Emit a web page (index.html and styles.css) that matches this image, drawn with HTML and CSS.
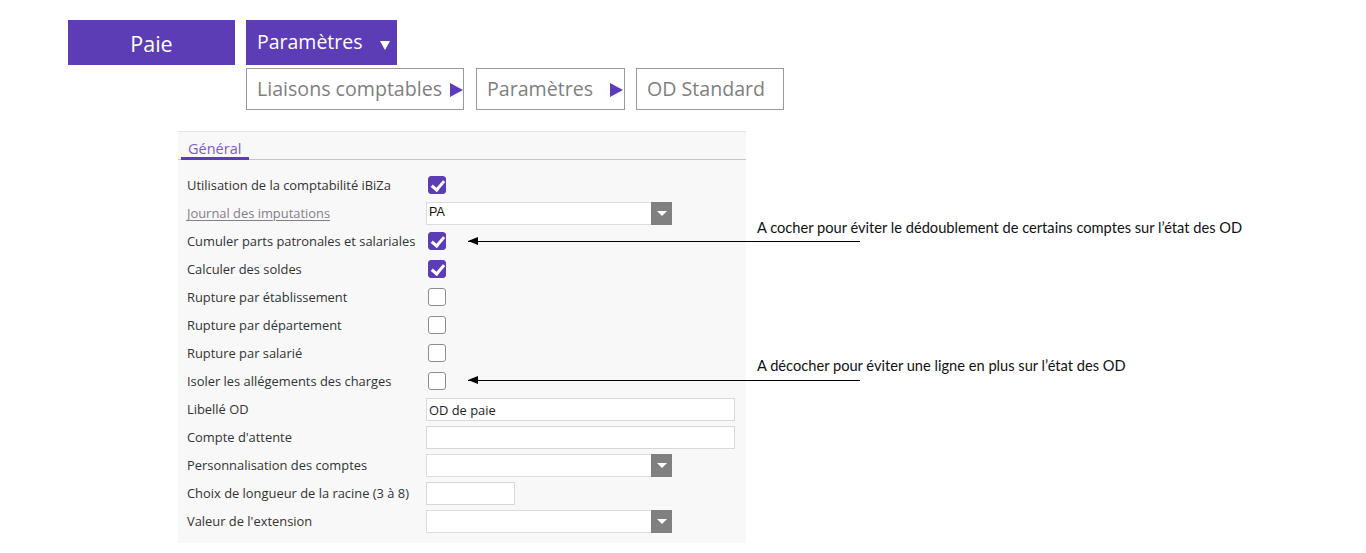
FILE: index.html
```html
<!DOCTYPE html>
<html lang="fr">
<head>
<meta charset="utf-8">
<title>Paie - Paramètres - OD Standard</title>
<link rel="stylesheet" href="styles.css">
</head>
<body>
<header class="nav">
  <div class="nav-top">
    <div class="nav-main">Paie</div>
    <div class="nav-sub">Paramètres <span class="caret"></span></div>
  </div>
  <div class="crumbs">
    <div class="crumb crumb-1">Liaisons comptables <span class="tri"></span></div>
    <div class="crumb crumb-2">Paramètres <span class="tri"></span></div>
    <div class="crumb crumb-3">OD Standard</div>
  </div>
</header>

<section class="panel">
  <div class="tabs"><span class="tab">Général</span></div>
  <div class="form">
    <div class="row"><span class="label">Utilisation de la comptabilité iBiZa</span><span class="check on"></span></div>
    <div class="row"><span class="label link">Journal des imputations </span><span class="select"><span class="val">PA</span><span class="btn"></span></span></div>
    <div class="row"><span class="label">Cumuler parts patronales et salariales</span><span class="check on"></span></div>
    <div class="row"><span class="label">Calculer des soldes</span><span class="check on"></span></div>
    <div class="row"><span class="label">Rupture par établissement</span><span class="check"></span></div>
    <div class="row"><span class="label">Rupture par département</span><span class="check"></span></div>
    <div class="row"><span class="label">Rupture par salarié</span><span class="check"></span></div>
    <div class="row"><span class="label">Isoler les allégements des charges</span><span class="check"></span></div>
    <div class="row"><span class="label">Libellé OD</span><span class="input">OD de paie</span></div>
    <div class="row"><span class="label">Compte d'attente</span><span class="input"></span></div>
    <div class="row"><span class="label">Personnalisation des comptes</span><span class="select"><span class="val"></span><span class="btn"></span></span></div>
    <div class="row"><span class="label">Choix de longueur de la racine (3 à 8)</span><span class="input small"></span></div>
    <div class="row"><span class="label">Valeur de l'extension</span><span class="select"><span class="val"></span><span class="btn"></span></span></div>
  </div>
</section>

<div class="note note-1">
  <span class="note-text">A cocher pour éviter le dédoublement de certains comptes sur l’état des OD</span>
  <span class="arrow"></span>
</div>
<div class="note note-2">
  <span class="note-text">A décocher pour éviter une ligne en plus sur l’état des OD</span>
  <span class="arrow"></span>
</div>
</body>
</html>
```

FILE: styles.css
```css
* { box-sizing: border-box; }
html, body { margin: 0; padding: 0; background: #fff; }
body { font-family: "Open Sans", "Noto Sans", sans-serif; position: relative; width: 1366px; height: 553px; overflow: hidden; }

.nav { padding: 20px 0 0 68px; }
.nav-top { display: flex; gap: 11px; }
.nav-main, .nav-sub {
  background: #5c3db5; color: #fff; height: 45px;
  font-family: "Open Sans", sans-serif;
}
.nav-main { width: 167px; display: flex; align-items: center; justify-content: center; padding-top: 2px; font-size: 21.5px; }
.nav-sub { width: 151px; padding: 8px 0 0 11px; font-size: 19.5px; }
.caret {
  display: inline-block; width: 0; height: 0; margin-left: 12px; vertical-align: -1px;
  border-left: 5px solid transparent; border-right: 5px solid transparent; border-top: 9px solid #fff;
}
.crumbs { display: flex; margin: 3px 0 0 178px; }
.crumb {
  height: 42px; border: 1px solid #9a9a9a; color: #7f7f7f;
  font-size: 19.6px; padding: 6px 0 0 10px; white-space: nowrap;
}
.crumb-1 { width: 218px; margin-right: 12px; }
.crumb-2 { width: 149px; margin-right: 11px; }
.crumb-3 { width: 148px; }
.tri {
  display: inline-block; width: 0; height: 0; vertical-align: -1px;
  border-top: 7px solid transparent; border-bottom: 7px solid transparent; border-left: 13px solid #5c3db5;
}
.crumb-1 .tri { margin-left: 3px; }
.crumb-2 .tri { margin-left: 12px; }

.panel {
  margin: 21px 0 0 178px; width: 568px; height: 412px;
  background: #f8f8f8; border-top: 1px solid #e4e4e4;
}
.tabs { height: 28px; border-bottom: 1px solid #c6c6c6; padding-left: 3px; display: flex; align-items: flex-end; }
.tab {
  color: #7a5cc6; font-size: 14.5px; padding: 0 8px 0 7px; line-height: 17px;
  border-bottom: 3px solid #5c3db5; margin-bottom: -1px;
}
.form { padding: 11px 0 0 9px; }
.row { display: flex; align-items: center; height: 28px; }
.label { width: 239px; font-size: 12.9px; color: #333; white-space: nowrap; }
.label.link { color: #857d88; text-decoration: underline; text-underline-offset: 2px; }

.check {
  width: 18px; height: 18px; margin-left: 2px; border: 1px solid #8c8c8c; border-radius: 3px; background: #fff; position: relative;
}
.check.on { background: #5c3db5; border-color: #5c3db5; }
.check.on::after {
  content: ""; position: absolute; left: 5px; top: 1px; width: 5px; height: 10px;
  border: solid #fff; border-width: 0 3px 3px 0; transform: rotate(40deg);
}
.select { display: flex; width: 246px; height: 23px; border: 1px solid #dcdcdc; background: #fff; }
.select .val { flex: 1; font-size: 12.5px; color: #111; padding: 2px 0 0 2px; font-family: "Liberation Sans", sans-serif; }
.select .btn { width: 21px; margin: -1px -1px -1px 0; background: #808080; display: flex; align-items: center; justify-content: center; }
.select .btn::after { content: ""; border-left: 5px solid transparent; border-right: 5px solid transparent; border-top: 5px solid #fff; }
.input { width: 309px; height: 23px; border: 1px solid #d8d8d8; background: #fff; font-size: 12.9px; color: #222; padding: 2px 0 0 2px; }
.input.small { width: 89px; }

.note { position: absolute; left: 0; top: 0; }
.note-text {
  position: absolute; left: 757px; white-space: nowrap;
  font-family: "Lato", "Liberation Sans", sans-serif; font-size: 14.65px; color: #111;
}
.arrow { position: absolute; left: 468px; width: 392px; height: 1px; background: #000; }
.arrow::before {
  content: ""; position: absolute; left: 0; top: -4px;
  border-top: 4.5px solid transparent; border-bottom: 4.5px solid transparent; border-right: 10px solid #000;
}
.note-1 .note-text { top: 219px; }
.note-1 .arrow { top: 241px; }
.note-2 .note-text { top: 357px; }
.note-2 .arrow { top: 380px; }
```
